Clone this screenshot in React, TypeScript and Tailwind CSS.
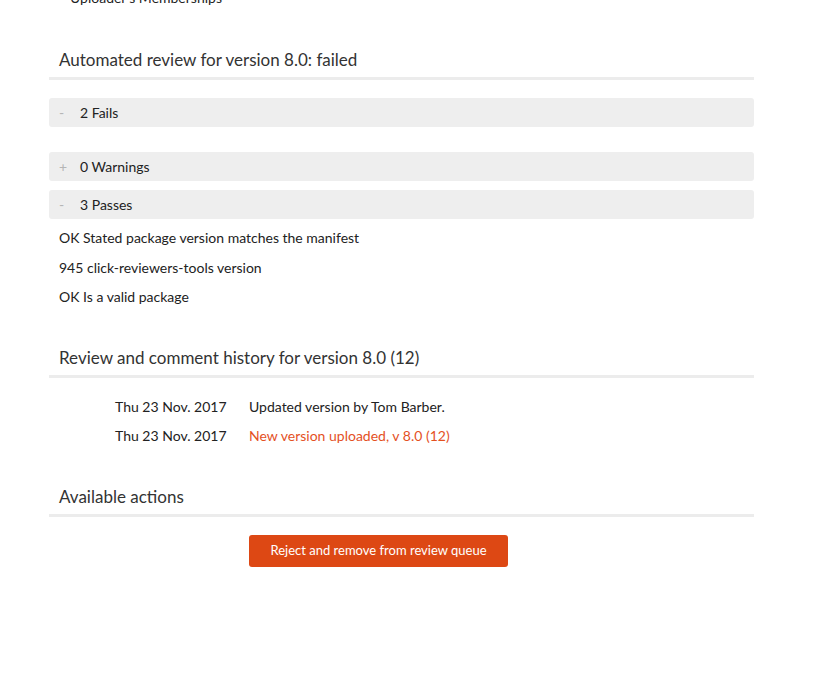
import React from "react";

type Check = { label: string; open: boolean; items?: string[] };

const checks: Check[] = [
  { label: "2 Fails", open: true, items: [] },
  { label: "0 Warnings", open: false },
  { label: "3 Passes", open: true, items: ["OK Stated package version matches the manifest", "945 click-reviewers-tools version", "OK Is a valid package"] },
];

const history = [
  { date: "Thu 23 Nov. 2017", text: "Updated version by Tom Barber.", link: false },
  { date: "Thu 23 Nov. 2017", text: "New version uploaded, v 8.0 (12)", link: true },
];

function SectionHeading({ children, className = "" }: { children: React.ReactNode; className?: string }) {
  return (
    <div className={className}>
      <h3 className="px-[10px] text-[17px] leading-[20px] font-normal text-[#333]">{children}</h3>
      <div className="mt-[7px] h-[3px] bg-[#ececec]" />
    </div>
  );
}

function CheckBar({ check }: { check: Check }) {
  return (
    <div>
      <div className="flex h-[29px] items-center rounded-[3px] bg-[#eeeeee] text-[14px]">
        <span className="w-[31px] pl-[10px] text-[#b5b5b5]">{check.open ? "-" : "+"}</span>
        <span className="text-[#222]">{check.label}</span>
      </div>
      {check.open && check.items && (
        <ul className={check.items.length ? "mt-[4px]" : "h-[16px]"}>
          {check.items.map((item) => (
            <li key={item} className="px-[10px] text-[14px] leading-[29.5px] text-[#222]">
              {item}
            </li>
          ))}
        </ul>
      )}
    </div>
  );
}

export default function App() {
  return (
    <div className="h-[680px] w-[818px] overflow-hidden bg-white" style={{ fontFamily: "Lato, 'Open Sans', sans-serif" }}>
      <div className="ml-[49px] w-[705px]">
        <p className="mt-[-12px] pl-[21px] text-[14px] leading-[20px] text-[#222]">Uploader's Memberships</p>

        <SectionHeading className="mt-[42px]">Automated review for version 8.0: failed</SectionHeading>

        <div className="mt-[18px] flex flex-col gap-[9px]">
          {checks.map((c) => (
            <CheckBar key={c.label} check={c} />
          ))}
        </div>

        <SectionHeading className="mt-[36px]">Review and comment history for version 8.0 (12)</SectionHeading>

        <div className="mt-[14px] text-[14px] text-[#222]">
          {history.map((h, i) => (
            <div key={i} className="flex leading-[29px]">
              <span className="w-[200px] pl-[66px]">{h.date}</span>
              <span className={h.link ? "text-[#e4511f]" : ""}>{h.text}</span>
            </div>
          ))}
        </div>

        <SectionHeading className="mt-[37px]">Available actions</SectionHeading>

        <div className="mt-[18px] pl-[200px]">
          <button className="h-[32px] w-[259px] rounded-[3px] bg-[#dd4814] text-[13px] font-normal text-white">
            Reject and remove from review queue
          </button>
        </div>
      </div>
    </div>
  );
}
